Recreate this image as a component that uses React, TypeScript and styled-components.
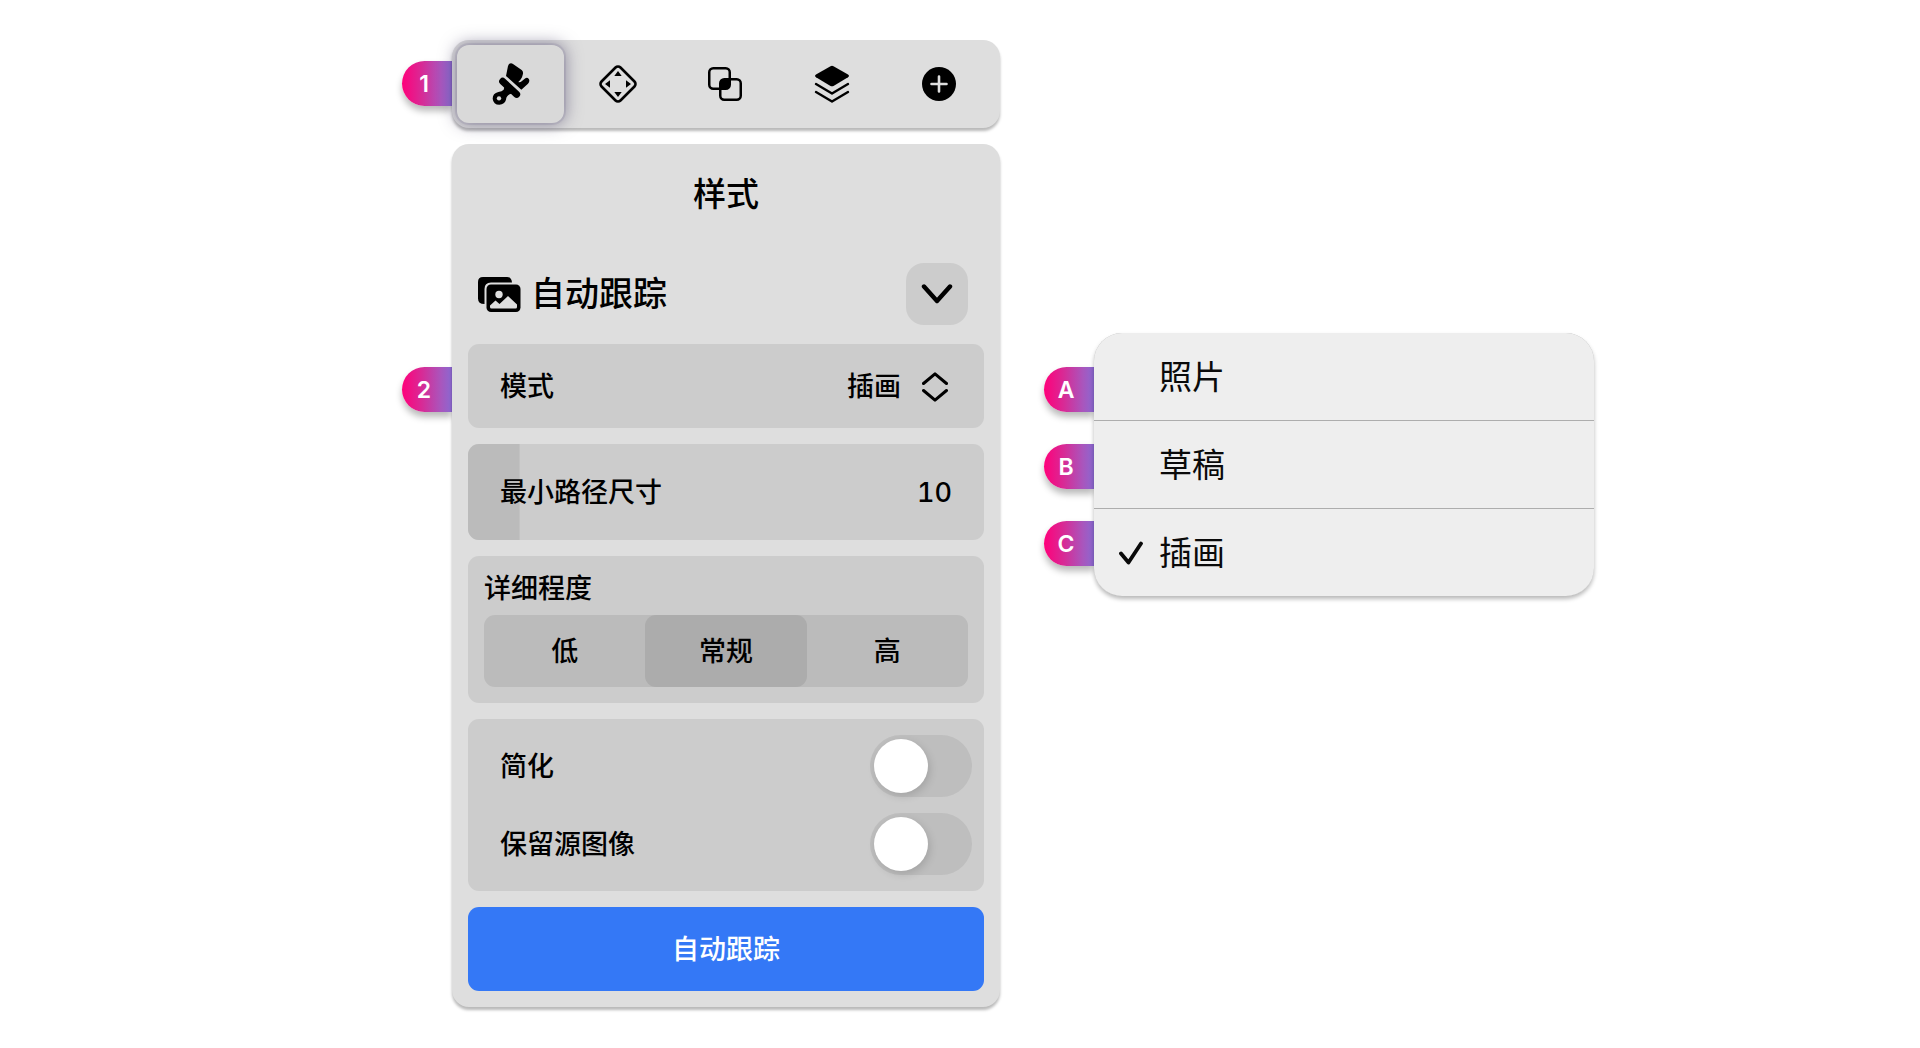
import React, { useState } from "react";
import styled, { createGlobalStyle } from "styled-components";

const GlobalStyle = createGlobalStyle`
  *, *::before, *::after { box-sizing: border-box; }
  body {
    margin: 0;
    background: #fff;
    color: #000;
    font-family: Inter, "Noto Sans CJK SC", sans-serif;
    font-size: 27px;
    font-weight: 500;
    line-height: 42px;
  }
  button, select, input { font: inherit; color: inherit; margin: 0; }
  button { border: 0; padding: 0; background: none; cursor: pointer; }
`;

const Page = styled.main`
  display: flex;
  flex-wrap: wrap;
  align-items: flex-start;
  gap: 44px;
  padding: 40px min(325px, 16vw) 40px min(402px, 21vw);
`;

const Column = styled.div<{ $width: number; $top?: number }>`
  display: flex;
  flex-direction: column;
  flex: 0 1 ${(p) => p.$width}px;
  min-width: 0;
  gap: 16px;
  padding-top: ${(p) => p.$top ?? 0}px;
`;

const Annotated = styled.div`
  display: flex;
  align-items: flex-start;
`;

const Callouts = styled.div<{ $top: number }>`
  display: flex;
  flex-direction: column;
  flex: none;
  gap: 32px;
  padding-top: ${(p) => p.$top}px;
`;

const Badge = styled.span`
  display: flex;
  align-items: center;
  justify-content: center;
  width: 50px;
  height: 45px;
  padding-right: 6px;
  border-radius: 23px 0 0 23px;
  background: linear-gradient(90deg, #ff007a 0%, #d72b96 40%, #a956bd 78%, #8a68d0 100%);
  box-shadow: 0 5px 7px rgba(0, 0, 0, 0.28);
  color: #fff;
  font-size: 23px;
  font-weight: 600;
`;

const Toolbar = styled.div`
  position: relative;
  display: flex;
  flex: 1;
  min-width: 0;
  height: 88px;
  padding: 5px 7px 5px 5px;
  border-radius: 17px;
  background: #dedede;
  box-shadow: 0 3px 3px rgba(0, 0, 0, 0.28);
`;

const Tool = styled.button<{ $active: boolean }>`
  display: flex;
  align-items: center;
  justify-content: center;
  flex: 1;
  border-radius: 12px;
  background: ${(p) => (p.$active ? "#d9d9d9" : "transparent")};
  box-shadow: ${(p) =>
    p.$active ? "0 0 0 2px rgba(100, 90, 130, 0.12), 0 0 16px 2px rgba(70, 62, 100, 0.5)" : "none"};
`;

const Panel = styled.section`
  position: relative;
  display: flex;
  flex-direction: column;
  flex: 1;
  min-width: 0;
  gap: 16px;
  padding: 0 16px 16px;
  border-radius: 17px;
  background: #dedede;
  box-shadow: 0 3px 3px rgba(0, 0, 0, 0.28);
`;

const PanelTitle = styled.h1`
  margin: 0;
  padding: 25px 0 28px;
  font-size: 33px;
  font-weight: 500;
  line-height: 50px;
  text-align: center;
`;

const SectionHead = styled.div`
  display: flex;
  align-items: center;
  gap: 10px;
  padding: 0 16px 3px 10px;
`;

const SectionTitle = styled.h2`
  flex: 1;
  margin: 0;
  font-size: 34px;
  font-weight: 500;
  line-height: 50px;
`;

const CollapseButton = styled.button`
  display: flex;
  align-items: center;
  justify-content: center;
  width: 62px;
  height: 62px;
  border-radius: 18px;
  background: #cccccc;
`;

const Card = styled.div`
  border-radius: 11px;
  background: #cccccc;
`;

const ModeCard = styled(Card)`
  display: flex;
  align-items: center;
  justify-content: space-between;
  height: 84px;
  padding: 2px 36px 0 32px;
`;

const ModeValue = styled.span`
  display: flex;
  align-items: center;
  gap: 21px;
`;

const ModeSelect = styled.select`
  appearance: none;
  border: 0;
  padding: 0;
  background: transparent;
  text-align-last: right;
`;

const SliderCard = styled(Card)`
  display: grid;
  grid-template-columns: 1fr auto;
  align-items: center;
  height: 96px;
  padding: 2px 32px 0;
  position: relative;
  overflow: hidden;
`;

const SliderLabel = styled.label`
  z-index: 1;
  pointer-events: none;
`;

const SliderValue = styled.output`
  z-index: 1;
  pointer-events: none;
  font-variant-numeric: tabular-nums;
`;

const Slider = styled.input`
  position: absolute;
  inset: 0;
  width: 100%;
  height: 100%;
  appearance: none;
  background: linear-gradient(#bbbbbb, #bbbbbb) left / 10% 100% no-repeat;
  &::-webkit-slider-thumb { appearance: none; width: 1px; height: 96px; background: transparent; }
`;

const DetailCard = styled(Card)`
  display: flex;
  flex-direction: column;
  gap: 5px;
  padding: 12px 16px 16px;
`;

const Segments = styled.div`
  display: flex;
  height: 72px;
  border-radius: 11px;
  background: #bbbbbb;
`;

const Segment = styled.label`
  display: flex;
  align-items: center;
  justify-content: center;
  flex: 1;
  padding-top: 2px;
  border-radius: 11px;
  cursor: pointer;
  &:has(input:checked) { background: #acacac; }
  input {
    appearance: none;
    width: 0;
    height: 0;
  }
`;

const ToggleCard = styled(Card)`
  display: flex;
  flex-direction: column;
  gap: 16px;
  padding: 16px 12px 16px 32px;
`;

const ToggleRow = styled.label`
  display: flex;
  align-items: center;
  justify-content: space-between;
`;

const ToggleText = styled.span`
  padding-top: 2px;
`;

const Switch = styled.input`
  appearance: none;
  width: 102px;
  height: 62px;
  padding: 4px;
  border-radius: 31px;
  background: #bebebe;
  cursor: pointer;
  &::before {
    content: "";
    display: block;
    width: 54px;
    height: 54px;
    border-radius: 50%;
    background: #fff;
    box-shadow: 2px 3px 8px rgba(0, 0, 0, 0.14);
  }
  &:checked { background: #3478f6; }
  &:checked::before { margin-left: auto; }
`;

const PrimaryButton = styled.button`
  height: 84px;
  padding-top: 2px;
  border-radius: 11px;
  background: #3478f6;
  color: #fff;
`;

const MenuShadow = styled.div`
  position: relative;
  display: flex;
  flex: 1;
  border-radius: 28px;
  box-shadow: 0 3px 4px rgba(0, 0, 0, 0.28);
`;

const Menu = styled.div`
  display: flex;
  flex-direction: column;
  flex: 1;
  min-width: 0;
  gap: 1px;
  overflow: hidden;
  border-radius: 28px;
  background: #adadad;
`;

const MenuItem = styled.button`
  display: grid;
  grid-template-columns: 24px 1fr;
  align-items: center;
  gap: 16px;
  height: 87px;
  padding: 0 25px;
  background: #eeeeee;
  color: #0a0a0a;
  font-size: 33px;
  font-weight: 400;
  text-align: left;
`;

const BrushIcon = () => (
  <svg width="38" height="42" viewBox="38 37 114 126" aria-hidden="true">
    <path d="M89 40Q95 36 101 40L127 58Q132 62 131 69L128 80Q124 88 117 94Q122 96 128 91L138 83Q144 79 149 86Q152 92 146 99L126 117L80 76L86 46Z" />
    <path d="M70 92L112 131" stroke="#000" strokeWidth="21" strokeLinecap="round" />
    <path d="M78 98L73 117Q68 123 57 124Q40 128 40 144Q42 162 60 162Q76 161 80 147Q81 136 91 131L104 126Z" />
    <circle cx="59" cy="143" r="6.500" fill="#d9d9d9" />
  </svg>
);

const MoveIcon = () => (
  <svg width="40" height="40" viewBox="0 0 40 40" aria-hidden="true">
    <rect x="6.600" y="6.600" width="26.800" height="26.800" rx="3.500" transform="rotate(45 20 20)" fill="none" stroke="#000" strokeWidth="2.600" />
    <path d="M20 7l3.700 5h-7.400zM20 33l3.700-5h-7.400zM7 20l5-3.700v7.400zM33 20l-5-3.700v7.400z" />
  </svg>
);

const CombineIcon = () => (
  <svg width="34" height="34" viewBox="0 0 34 34" aria-hidden="true">
    <g fill="none" stroke="#000" strokeWidth="2.500">
      <rect x="1.250" y="1.250" width="20.500" height="20.500" rx="4" />
      <rect x="12.250" y="12.250" width="20.500" height="20.500" rx="4" />
    </g>
    <path d="M16 12h6v6a4 4 0 0 1-4 4h-6v-6a4 4 0 0 1 4-4z" />
  </svg>
);

const LayersIcon = () => (
  <svg width="36" height="38" viewBox="0 0 36 38" aria-hidden="true">
    <path d="M16.500 1.200Q18 .4 19.500 1.200L34 9.600Q36 11 34 12.300L19.500 20.900Q18 21.700 16.500 20.900L2 12.300Q0 11 2 9.600Z" />
    <path d="M2 19L18 28.500L34 19M2 27L18 36.500L34 27" fill="none" stroke="#000" strokeWidth="2.400" strokeLinecap="round" strokeLinejoin="round" />
  </svg>
);

const AddIcon = () => (
  <svg width="34" height="34" viewBox="0 0 34 34" aria-hidden="true">
    <circle cx="17" cy="17" r="17" />
    <path d="M17 9.500v15M9.500 17h15" stroke="#dedede" strokeWidth="2.600" strokeLinecap="round" />
  </svg>
);

const GalleryIcon = () => (
  <svg width="43" height="36" viewBox="0 0 43 36" aria-hidden="true">
    <path d="M5 1H29Q33.500 1 34 6.500H13Q6.500 6.500 6.500 13V28Q0 28 0 22.500V6Q0 1 5 1Z" />
    <rect x="8.500" y="8.500" width="34" height="27.500" rx="4.500" />
    <circle cx="21" cy="18.500" r="3.700" fill="#dedede" />
    <path d="M12 31V29.500L17.500 24.500L21.500 28L30 20L39 28.500V31Q39 32.500 37.500 32.500H13.500Q12 32.500 12 31Z" fill="#dedede" />
  </svg>
);

const ChevronIcon = () => (
  <svg width="32" height="22" viewBox="0 0 32 22" aria-hidden="true">
    <path d="M3 3.500L16 18L29 3.500" fill="none" stroke="#000" strokeWidth="4.400" strokeLinecap="round" strokeLinejoin="round" />
  </svg>
);

const UpDownIcon = () => (
  <svg width="26" height="30" viewBox="0 0 26 30" aria-hidden="true">
    <path d="M1.500 11.500L13 1.800L24.500 11.500M1.500 18.500L13 28.200L24.500 18.500" fill="none" stroke="#000" strokeWidth="3" strokeLinecap="round" strokeLinejoin="round" />
  </svg>
);

const CheckIcon = () => (
  <svg width="24" height="24" viewBox="0 0 24 24" aria-hidden="true">
    <path d="M2 12.500L9.500 21.500L22 2.500" fill="none" stroke="#0a0a0a" strokeWidth="3.800" strokeLinecap="round" strokeLinejoin="round" />
  </svg>
);

const TOOLS = [
  { label: "样式", Icon: BrushIcon },
  { label: "变换", Icon: MoveIcon },
  { label: "组合", Icon: CombineIcon },
  { label: "图层", Icon: LayersIcon },
  { label: "添加", Icon: AddIcon },
];
const MODES = ["照片", "草稿", "插画"];
const DETAILS = ["低", "常规", "高"];
const TOGGLES = ["简化", "保留源图像"];

export default function App() {
  const [tool, setTool] = useState(0);
  const [mode, setMode] = useState("插画");
  const [size, setSize] = useState(10);

  return (
    <>
      <GlobalStyle />
      <Page>
        <Column $width={598}>
          <Annotated>
            <Callouts $top={21}>
              <Badge>1</Badge>
            </Callouts>
            <Toolbar role="toolbar">
              {TOOLS.map(({ label, Icon }, i) => (
                <Tool key={label} $active={i === tool} aria-label={label} onClick={() => setTool(i)}>
                  <Icon />
                </Tool>
              ))}
            </Toolbar>
          </Annotated>

          <Annotated>
            <Callouts $top={223}>
              <Badge>2</Badge>
            </Callouts>
            <Panel>
              <PanelTitle>样式</PanelTitle>
              <SectionHead>
                <GalleryIcon />
                <SectionTitle>自动跟踪</SectionTitle>
                <CollapseButton aria-label="折叠">
                  <ChevronIcon />
                </CollapseButton>
              </SectionHead>

              <ModeCard>
                <label htmlFor="mode">模式</label>
                <ModeValue>
                  <ModeSelect id="mode" value={mode} onChange={(e) => setMode(e.target.value)}>
                    {MODES.map((m) => (
                      <option key={m}>{m}</option>
                    ))}
                  </ModeSelect>
                  <UpDownIcon />
                </ModeValue>
              </ModeCard>

              <SliderCard>
                <Slider
                  id="size"
                  type="range"
                  min={0}
                  max={100}
                  value={size}
                  style={{ backgroundSize: `${size}% 100%` }}
                  onChange={(e) => setSize(Number(e.target.value))}
                />
                <SliderLabel htmlFor="size">最小路径尺寸</SliderLabel>
                <SliderValue htmlFor="size">{size}</SliderValue>
              </SliderCard>

              <DetailCard>
                <span id="detail">详细程度</span>
                <Segments role="radiogroup" aria-labelledby="detail">
                  {DETAILS.map((d) => (
                    <Segment key={d}>
                      <input type="radio" name="detail" defaultChecked={d === "常规"} />
                      {d}
                    </Segment>
                  ))}
                </Segments>
              </DetailCard>

              <ToggleCard>
                {TOGGLES.map((t) => (
                  <ToggleRow key={t}>
                    <ToggleText>{t}</ToggleText>
                    <Switch type="checkbox" role="switch" />
                  </ToggleRow>
                ))}
              </ToggleCard>

              <PrimaryButton>自动跟踪</PrimaryButton>
            </Panel>
          </Annotated>
        </Column>

        <Column $width={550} $top={293}>
          <Annotated>
            <Callouts $top={34}>
              <Badge>A</Badge>
              <Badge>B</Badge>
              <Badge>C</Badge>
            </Callouts>
            <MenuShadow>
              <Menu role="menu">
                {MODES.map((m) => (
                  <MenuItem key={m} role="menuitemradio" aria-checked={m === mode} onClick={() => setMode(m)}>
                    <span>{m === mode && <CheckIcon />}</span>
                    <span>{m}</span>
                  </MenuItem>
                ))}
              </Menu>
            </MenuShadow>
          </Annotated>
        </Column>
      </Page>
    </>
  );
}
